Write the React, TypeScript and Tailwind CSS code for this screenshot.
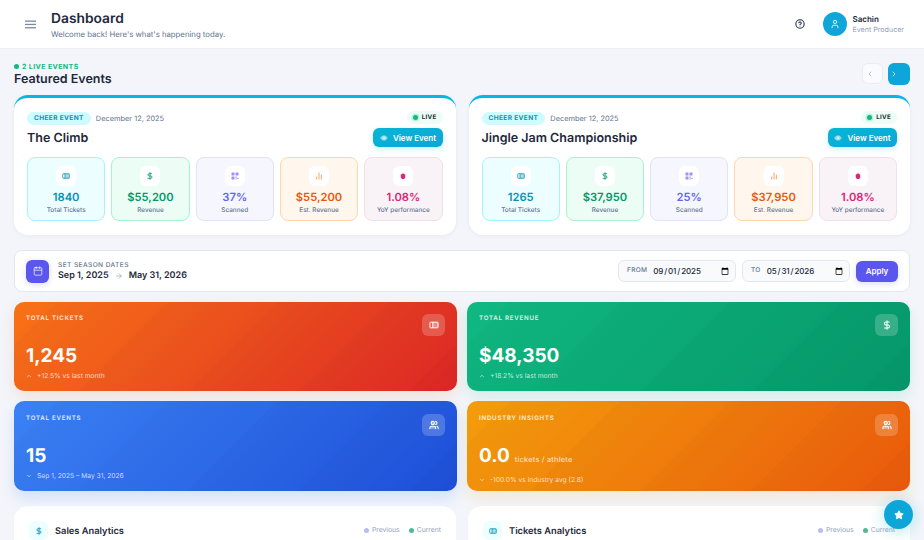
import {
  Calendar,
  ArrowRight,
  ChevronDown,
  ChevronLeft,
  ChevronRight,
  ChevronUp,
  ChartNoAxesColumn,
  CircleHelp,
  DollarSign,
  Eye,
  Star,
  User,
  Users,
} from 'lucide-react'
import type { ReactNode } from 'react'

const MenuIcon = ({ className }: { className?: string }) => (
  <svg viewBox="0 0 11 9" fill="currentColor" className={className}>
    <rect x="0" y="0.5" width="11" height="1.3" />
    <rect x="0" y="3.8" width="11" height="1.3" />
    <rect x="0" y="7.1" width="11" height="1.3" />
  </svg>
)

const TicketIcon = ({ className }: { className?: string }) => (
  <svg viewBox="0 0 16 16" fill="none" stroke="currentColor" strokeWidth="1.6" className={className}>
    <rect x="6" y="3.5" width="8.5" height="9" fill="currentColor" opacity="0.3" stroke="none" />
    <rect x="1.5" y="3.5" width="13" height="9" rx="1" />
    <path d="M6 3.5v9" />
  </svg>
)

const QrIcon = ({ className }: { className?: string }) => (
  <svg viewBox="0 0 16 16" fill="currentColor" className={className}>
    <rect x="1" y="1" width="6" height="6" rx="1" />
    <rect x="9" y="1" width="6" height="6" rx="1" />
    <rect x="1" y="9" width="6" height="6" rx="1" />
    <rect x="9" y="9" width="2.5" height="2.5" />
    <rect x="12.5" y="11.5" width="2.5" height="2.5" />
    <rect x="9" y="13" width="2.5" height="2" />
  </svg>
)

const DropIcon = ({ className }: { className?: string }) => (
  <svg viewBox="0 0 16 16" fill="currentColor" className={className}>
    <path d="M8 1.5l1.5 2.5 3 1v4.5c0 2.8-2 5-4.5 5s-4.500-2.200-4.500-5V5l3-1z" />
  </svg>
)

type TileProps = {
  icon: ReactNode
  value: string
  label: string
  tile: string
  text: string
}

const StatTile = ({ icon, value, label, tile, text }: TileProps) => (
  <div className={`flex h-[64px] flex-col items-center rounded-lg border pt-[8px] ${tile}`}>
    <div className="flex h-5 w-5 items-center justify-center rounded-md bg-white">{icon}</div>
    <div className={`mt-[3px] text-[11.2px] leading-[16px] font-semibold ${text}`}>{value}</div>
    <div className="mt-[1px] text-[6.4px] leading-[9px] font-medium text-slate-500">{label}</div>
  </div>
)

type EventCardProps = {
  title: string
  tickets: string
  revenue: string
  scanned: string
}

const EventCard = ({ title, tickets, revenue, scanned }: EventCardProps) => (
  <div className="h-[140px] rounded-[14px] border-t-[3px] border-[#06b6e4] bg-white px-[13px] pt-[13px] shadow-[0_1px_4px_rgba(15,23,42,0.05)]">
    <div className="flex h-[36px] justify-between">
      <div>
        <div className="mt-[1px] flex h-[13px] items-center gap-[5px]">
          <span className="rounded-full bg-[#cffafe] px-[7px] py-[2px] text-[6.5px] leading-[9px] font-bold tracking-[0.4px] text-[#0891b2]">
            CHEER EVENT
          </span>
          <span className="text-[7.4px] text-slate-500">December 12, 2025</span>
        </div>
        <div className="mt-[5px] text-[12.5px] leading-[18px] font-semibold text-[#1e293b]">{title}</div>
      </div>
      <div className="flex flex-col items-end">
        <span className="flex h-[13px] items-center gap-[4px] rounded-full bg-[#ecfdf5] px-[6px] text-[6.2px] font-bold tracking-[0.3px] text-[#1e293b]">
          <span className="h-[5px] w-[5px] rounded-full bg-[#10b981] shadow-[0_0_0_1.5px_rgba(16,185,129,0.2)]" />
          LIVE
        </span>
        <button className="mt-[4px] flex h-[19px] items-center gap-[5px] rounded-md bg-gradient-to-br from-[#06b6d4] to-[#0ea5d9] px-[6.5px] text-[8px] font-semibold text-white shadow-[0_2px_6px_rgba(6,182,212,0.2)]">
          <Eye className="h-2 w-2 fill-white/50 text-white/50" />
          View Event
        </button>
      </div>
    </div>
    <div className="mt-[10px] grid grid-cols-5 gap-[6px]">
      <StatTile
        icon={<TicketIcon className="h-2 w-2 text-[#0891b2]" />}
        value={tickets}
        label="Total Tickets"
        tile="border-[#a5f3fc] bg-[#ecfeff]"
        text="text-[#0891b2]"
      />
      <StatTile
        icon={<DollarSign className="h-2 w-2 text-[#059669]" strokeWidth={2.5} />}
        value={revenue}
        label="Revenue"
        tile="border-[#a7f3d0] bg-[#ecfdf5]"
        text="text-[#059669]"
      />
      <StatTile
        icon={<QrIcon className="h-2 w-2 text-[#a78bfa]" />}
        value={scanned}
        label="Scanned"
        tile="border-[#dde3fa] bg-[#f5f6fe]"
        text="text-[#6366f1]"
      />
      <StatTile
        icon={<ChartNoAxesColumn className="h-2 w-2 text-[#f97316]" />}
        value={revenue}
        label="Est. Revenue"
        tile="border-[#fed7aa] bg-[#fff7ed]"
        text="text-[#ea580c]"
      />
      <StatTile
        icon={<DropIcon className="h-2 w-2 text-[#db2777]" />}
        value="1.08%"
        label="YoY performance"
        tile="border-[#f3dfe6] bg-[#f9f2f7]"
        text="text-[#db2777]"
      />
    </div>
  </div>
)

type KpiProps = {
  label: string
  value: string
  suffix?: string
  note: string
  up?: boolean
  icon: ReactNode
  bg: string
}

const KpiCard = ({ label, value, suffix, note, up, icon, bg }: KpiProps) => (
  <div className={`relative flex h-full justify-between overflow-hidden rounded-[10px] px-3 ${bg}`}>
    <div className="absolute inset-0 bg-[repeating-linear-gradient(135deg,rgba(0,0,0,0.007)_0px,rgba(0,0,0,0)_30px,rgba(0,0,0,0.02)_31px,rgba(0,0,0,0.007)_78px)]" />
    <div className="relative flex flex-col">
      <div className="text-[6.1px] leading-[10px] font-semibold tracking-[0.8px] text-white/85">{label}</div>
      <div className="mt-[19px] flex items-baseline gap-[5px] text-[19px] leading-[26px] font-bold text-white">
        {value}
        {suffix && <span className="text-[7.4px] font-medium tracking-[0.2px] text-white/75">{suffix}</span>}
      </div>
      <div className="mt-[2px] flex items-center gap-[5px] text-[6.7px] leading-[10px] text-white/75">
        {up ? <ChevronUp className="h-1.5 w-1.5" strokeWidth={3} /> : <ChevronDown className="h-1.5 w-1.5" strokeWidth={3} />}
        {note}
      </div>
    </div>
    <div className="relative flex h-[22px] w-[23px] items-center justify-center rounded-md bg-white/20 text-white">
      {icon}
    </div>
  </div>
)

const DateField = ({ label, value, width }: { label: string; value: string; width: string }) => (
  <div className={`flex h-[22px] items-center gap-[5px] rounded-md border border-[#e2e8f0] bg-[#f8fafc] pl-2 ${width}`}>
    <span className="text-[6.5px] font-medium tracking-[0.3px] text-slate-500">{label}</span>
    <input
      type="date"
      defaultValue={value}
      className="h-full min-w-0 flex-1 bg-transparent pr-1 text-[8px] font-medium tracking-[-0.1px] text-[#1e293b] outline-none"
    />
  </div>
)

const AnalyticsCard = ({ title, icon }: { title: string; icon: ReactNode }) => (
  <div className="h-[60px] rounded-[14px] bg-white px-[15px] pt-[15px]">
    <div className="flex items-center justify-between">
      <div className="flex items-center gap-[7px]">
        <div className="flex h-[19px] w-[19px] items-center justify-center rounded-md bg-[#ecfeff] text-[#0891b2]">
          {icon}
        </div>
        <span className="pt-[2px] text-[9.3px] font-semibold text-[#1e293b]">{title}</span>
      </div>
      <div className="flex items-center gap-[9px] text-[6.8px] text-slate-400">
        <span className="flex items-center gap-[3px]">
          <span className="h-[5px] w-[5px] rounded-full bg-[#b9bdf7]" />
          Previous
        </span>
        <span className="flex items-center gap-[3px]">
          <span className="h-[5px] w-[5px] rounded-full bg-[#4dbb93]" />
          Current
        </span>
      </div>
    </div>
  </div>
)

export default function App() {
  return (
    <div className="relative flex h-[540px] w-[924px] flex-col overflow-hidden bg-[#f3f5fa] font-['Inter',sans-serif] antialiased [text-rendering:geometricPrecision]">
      <header className="flex h-[49px] shrink-0 items-center justify-between border-b border-[#edf0f5] bg-white pr-5 pl-[25px]">
        <div className="flex items-center gap-[15px]">
          <MenuIcon className="h-[9px] w-[11px] text-[#7b8aa0]" />
          <div>
            <h1 className="text-[13.8px] leading-[18px] font-semibold text-[#1e293b]">Dashboard</h1>
            <p className="mt-[1px] text-[7.75px] leading-[10px] text-slate-500">
              Welcome back! Here's what's happening today.
            </p>
          </div>
        </div>
        <div className="flex items-center gap-[18px]">
          <CircleHelp className="h-[10px] w-[10px] text-slate-800" strokeWidth={2.5} />
          <div className="flex items-center gap-[5.500px]">
            <div className="flex h-6 w-6 items-center justify-center rounded-full bg-[#0ea5d9] text-white">
              <User className="h-2.5 w-2.5" />
            </div>
            <div>
              <div className="text-[8px] leading-[11px] font-semibold text-[#1e293b]">Sachin</div>
              <div className="text-[7.1px] leading-[9px] text-slate-400">Event Producer</div>
            </div>
          </div>
        </div>
      </header>

      <main className="flex flex-col px-[14px] pt-[14px]">
        <div className="flex h-[32px] items-start justify-between">
          <div>
            <div className="flex items-center gap-[3px] text-[7px] leading-[7px] font-bold tracking-[0.4px] text-[#10b981]">
              <span className="h-[5px] w-[5px] rounded-full bg-[#10b981]" />2 LIVE EVENTS
            </div>
            <h2 className="mt-[2px] text-[12.5px] leading-[16px] font-semibold text-[#1e293b]">Featured Events</h2>
          </div>
          <div className="flex gap-[5px]">
            <button className="flex h-[21px] w-[21px] items-center rounded-md border border-[#e9edf3] bg-[#fafbfe] pl-[3px] text-slate-400">
              <ChevronLeft className="h-2 w-2" />
            </button>
            <button className="flex h-[22px] w-[22px] items-center rounded-md bg-[#0ea5d9] pl-[2px] text-white">
              <ChevronRight className="h-2 w-2" />
            </button>
          </div>
        </div>

        <div className="grid grid-cols-2 gap-[13px]">
          <EventCard title="The Climb" tickets="1840" revenue="$55,200" scanned="37%" />
          <EventCard title="Jingle Jam Championship" tickets="1265" revenue="$37,950" scanned="25%" />
        </div>

        <div className="mt-[15px] flex h-[42px] items-center justify-between rounded-lg border border-[#e2e8f0] bg-white px-[11px]">
          <div className="flex items-center gap-[9px]">
            <div className="flex h-[23px] w-[23px] items-center justify-center rounded-md bg-[#5b57ee] text-white/80 shadow-[0_2px_6px_rgba(91,87,238,0.2)]">
              <Calendar className="h-[10px] w-[10px]" />
            </div>
            <div>
              <div className="mt-[1px] text-[6.6px] leading-[9px] font-medium tracking-[0.4px] text-slate-500">
                SET SEASON DATES
              </div>
              <div className="flex items-center gap-[6px] text-[9px] leading-[12px] font-semibold text-[#1e293b]">
                Sep 1, 2025
                <ArrowRight className="h-2 w-2 text-slate-400" />
                May 31, 2026
              </div>
            </div>
          </div>
          <div className="flex items-center gap-[6px]">
            <DateField label="FROM" value="2025-09-01" width="w-[118px]" />
            <DateField label="TO" value="2026-05-31" width="w-[108px]" />
            <button className="h-[21px] w-[42px] rounded-md bg-[#5b57ee] text-[8px] font-semibold text-white shadow-[0_2px_6px_rgba(91,87,238,0.2)]">
              Apply
            </button>
          </div>
        </div>

        <div className="mt-[10px] grid grid-cols-2 grid-rows-[89px_90px] gap-x-[10px] gap-y-[10px]">
          <KpiCard
            label="TOTAL TICKETS"
            value="1,245"
            note="+12.5% vs last month"
            up
            icon={<TicketIcon className="h-[10px] w-[10px]" />}
            bg="pt-3 bg-[linear-gradient(135deg,#f97316,#dc2626)] shadow-[0_6px_14px_rgba(249,115,22,0.14)]"
          />
          <KpiCard
            label="TOTAL REVENUE"
            value="$48,350"
            note="+18.2% vs last month"
            up
            icon={<DollarSign className="h-[10px] w-[10px]" strokeWidth={2.5} />}
            bg="pt-3 bg-[linear-gradient(135deg,#10b981,#059669)] shadow-[0_6px_14px_rgba(16,185,129,0.14)]"
          />
          <KpiCard
            label="TOTAL EVENTS"
            value="15"
            note="Sep 1, 2025 – May 31, 2026"
            icon={<Users className="h-[10px] w-[10px] fill-white/40" strokeWidth={2.5} />}
            bg="pt-[13px] bg-[linear-gradient(135deg,#3b82f6,#1d4ed8)] shadow-[0_8px_14px_rgba(59,130,246,0.16)]"
          />
          <KpiCard
            label="INDUSTRY INSIGHTS"
            value="0.0"
            suffix="tickets / athlete"
            note="-100.0% vs industry avg (2.8)"
            icon={<Users className="h-[10px] w-[10px] fill-white/40" strokeWidth={2.5} />}
            bg="pt-[13px] bg-[linear-gradient(135deg,#f59e0b,#ea580c)] shadow-[0_8px_14px_rgba(245,158,11,0.14)]"
          />
        </div>

        <div className="mt-[15px] grid grid-cols-2 gap-3">
          <AnalyticsCard title="Sales Analytics" icon={<DollarSign className="h-2 w-2" strokeWidth={2.5} />} />
          <AnalyticsCard title="Tickets Analytics" icon={<TicketIcon className="h-2 w-2" />} />
        </div>
      </main>

      <button className="absolute top-[500px] left-[884px] flex h-[29px] w-[29px] items-center justify-center rounded-full bg-[#0ea5d9] text-white shadow-[0_2px_12px_4px_rgba(6,182,212,0.18)]">
        <Star className="h-2.5 w-2.5 fill-white" />
      </button>
    </div>
  )
}
